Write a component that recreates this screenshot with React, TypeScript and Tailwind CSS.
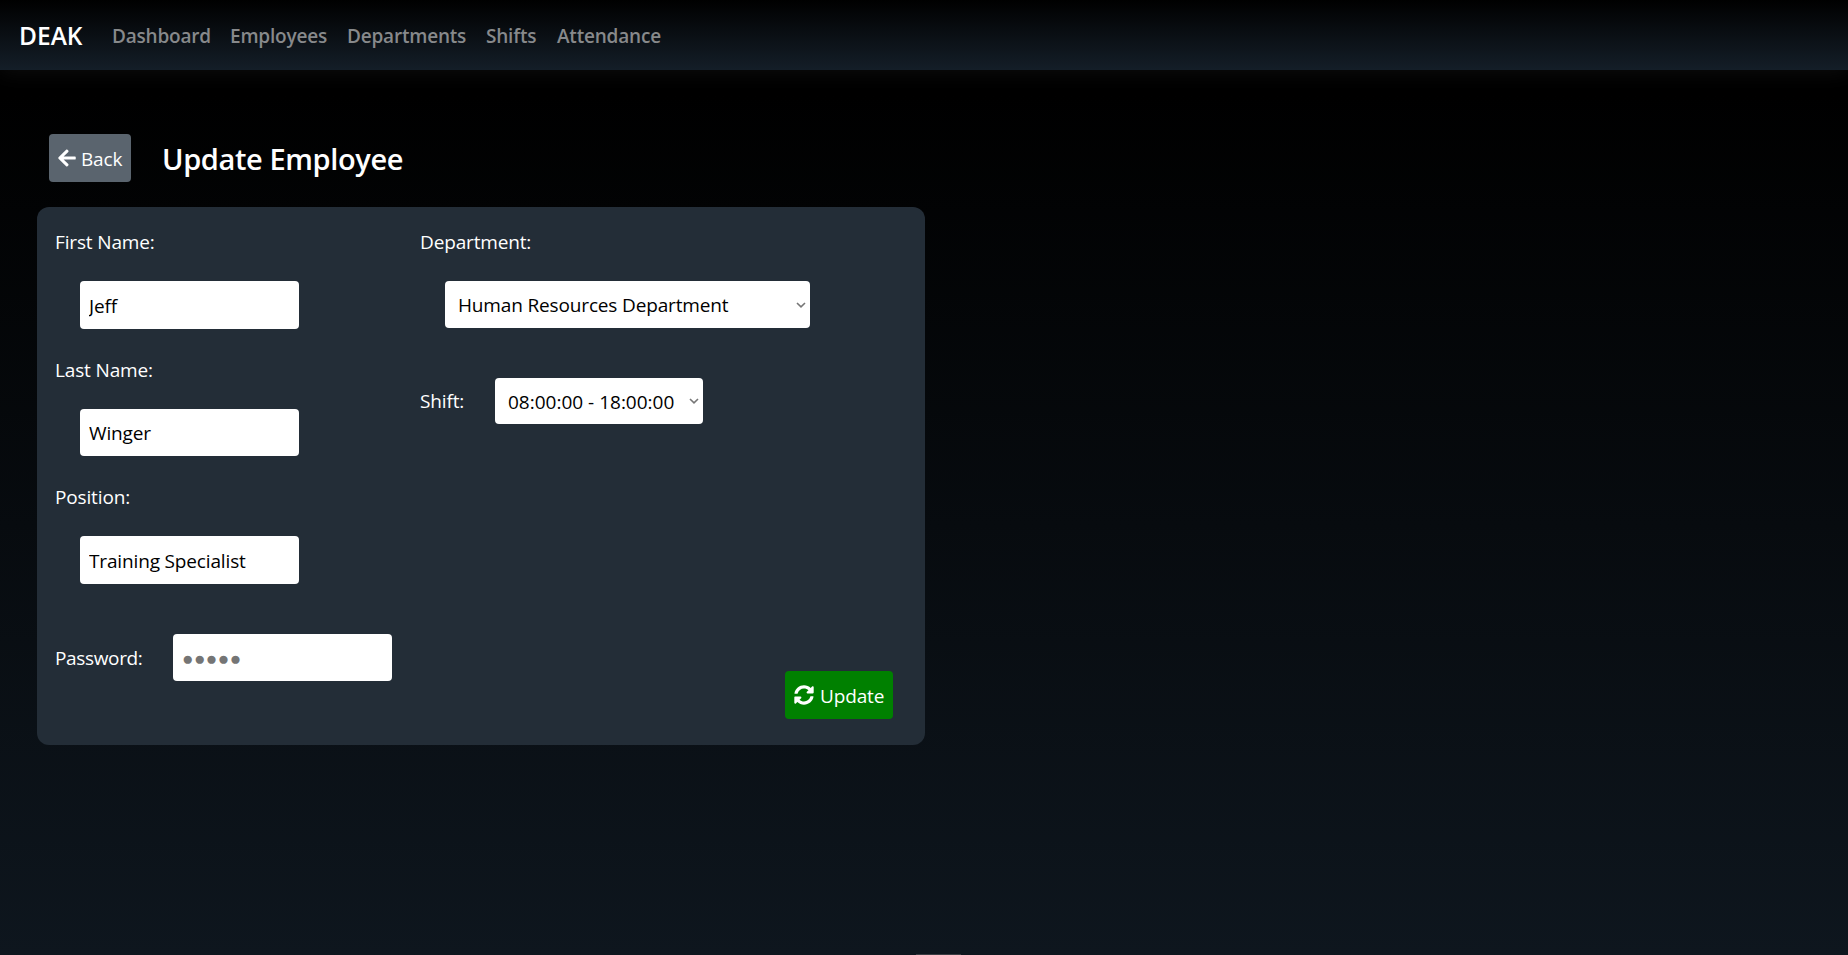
import type { ReactNode } from "react";

const navItems = [
  { label: "Dashboard", width: "w-[98px]" },
  { label: "Employees", width: "w-[97px]" },
  { label: "Departments", width: "w-[119px]" },
  { label: "Shifts", width: "w-[51px]" },
  { label: "Attendance", width: "w-[105px]" },
];

function Label({ children, className = "" }: { children: ReactNode; className?: string }) {
  return <span className={`whitespace-nowrap leading-[30px] text-white ${className}`}>{children}</span>;
}

function TextField({ label, value, inputClass }: { label: string; value: string; inputClass: string }) {
  return (
    <label className="flex flex-col">
      <Label>{label}</Label>
      <input
        defaultValue={value}
        className={`ml-[25px] w-[219px] rounded bg-white px-[9px] pt-px text-black outline-none ${inputClass}`}
      />
    </label>
  );
}

function Chevron() {
  return (
    <svg viewBox="0 0 10 6" className="h-[6px] w-[10px]" fill="none" stroke="#767676" strokeWidth="1.6">
      <path d="M1 1l4 3.8L9 1" />
    </svg>
  );
}

function SelectBox({ value, className }: { value: string; className: string }) {
  return (
    <button
      type="button"
      className={`flex items-center justify-between rounded bg-white pr-[4px] pl-[13px] whitespace-nowrap text-black ${className}`}
    >
      <span className="pt-0.5">{value}</span>
      <Chevron />
    </button>
  );
}

function ArrowLeft() {
  return (
    <svg viewBox="0 0 448 512" className="h-5 w-[18px]" fill="currentColor">
      <path d="M257.500 445.100l-22.200 22.200c-9.400 9.400-24.600 9.400-33.900 0L7 273c-9.400-9.400-9.400-24.600 0-33.900L201.400 44.700c9.400-9.400 24.600-9.400 33.900 0l22.200 22.200c9.500 9.500 9.300 25-.4 34.300L136.600 216H424c13.300 0 24 10.700 24 24v32c0 13.300-10.700 24-24 24H136.600l120.500 114.800c9.800 9.300 10 24.800.4 34.300z" />
    </svg>
  );
}

function Refresh() {
  return (
    <svg viewBox="0 0 512 512" className="size-5" fill="currentColor">
      <path d="M370.720 133.280C339.458 104.008 298.888 87.962 255.848 88c-77.458.068-144.328 53.178-162.791 126.850-1.344 5.363-6.122 9.150-11.651 9.150H24.103c-7.498 0-13.194-6.807-11.807-14.176C33.933 94.924 134.813 8 256 8c66.448 0 126.791 26.136 171.315 68.685L463.030 40.970C478.149 25.851 504 36.559 504 57.941V192c0 13.255-10.745 24-24 24H345.941c-21.382 0-32.090-25.851-16.971-40.971l41.750-41.749zM32 296h134.059c21.382 0 32.090 25.851 16.971 40.971l-41.750 41.750c31.262 29.273 71.835 45.319 114.876 45.280 77.418-.070 144.315-53.144 162.787-126.849 1.344-5.363 6.122-9.150 11.651-9.150h57.304c7.498 0 13.194 6.807 11.807 14.176C478.067 417.076 377.187 504 256 504c-66.448 0-126.791-26.136-171.315-68.685L48.970 471.030C33.851 486.149 8 475.441 8 454.059V320c0-13.255 10.745-24 24-24z" />
    </svg>
  );
}

export default function App() {
  return (
    <div className="relative flex h-[955px] w-full flex-col overflow-hidden bg-linear-to-b/srgb from-black from-10% to-[#0e161e] font-['Open_Sans',sans-serif] text-[19px] tracking-[-0.15px]">
      <nav className="flex h-[70px] shrink-0 items-center bg-linear-to-b/srgb from-black to-[#141e28] pt-px pl-[19px] shadow-[0_3px_20px_rgba(255,255,255,0.05)]">
        <a href="#" className="w-[93px] text-[24.5px] leading-[36px] font-semibold tracking-normal text-white">
          DEAK
        </a>
        <ul className="flex gap-[20px]">
          {navItems.map((item) => (
            <li key={item.label} className={item.width}>
              <a href="#" className="leading-[30px] font-semibold tracking-[-0.2px] whitespace-nowrap text-[#87898b]">
                {item.label}
              </a>
            </li>
          ))}
        </ul>
      </nav>

      <main className="pt-16 pl-[37px]">
        <header className="flex h-[73px] items-start pl-3">
          <button type="button" className="flex h-12 w-[82px] items-center gap-[5px] rounded bg-[#5a646e] pl-[9px] text-white">
            <ArrowLeft />
            <span className="pt-0.5">Back</span>
          </button>
          <h1 className="ml-[31px] pt-1 text-[29px] leading-[42px] font-semibold tracking-[-0.38px] text-white">
            Update Employee
          </h1>
        </header>

        <form className="flex h-[538px] w-[888px] rounded-xl bg-[#232d37] pt-5 pl-[18px]">
          <div className="flex w-[365px] flex-col">
            <TextField label="First Name:" value="Jeff" inputClass="mt-6 h-12" />
            <div className="pt-[26px]">
              <TextField label="Last Name:" value="Winger" inputClass="mt-6 h-[47px]" />
            </div>
            <div className="pt-[26px]">
              <TextField label="Position:" value="Training Specialist" inputClass="mt-6 h-12" />
            </div>
            <label className="mt-[50px] flex items-center">
              <Label className="w-[118px] tracking-[-0.35px]">Password:</Label>
              <input
                type="text"
                placeholder="●●●●●"
                className="h-[47px] w-[219px] rounded bg-white px-[9px] outline-none placeholder:tracking-[0.45px] placeholder:text-[#757575]"
              />
            </label>
          </div>

          <div className="flex flex-1 flex-col">
            <div className="flex flex-col">
              <Label>Department:</Label>
              <SelectBox value="Human Resources Department" className="mt-6 ml-[25px] h-[47px] w-[365px]" />
            </div>
            <div className="mt-[50px] flex items-center">
              <Label className="w-[75px]">Shift:</Label>
              <SelectBox value="08:00:00 - 18:00:00" className="h-[46px] w-[208px] tracking-normal" />
            </div>
            <button
              type="submit"
              className="mt-auto mr-8 mb-[26px] flex h-12 w-[108px] items-center gap-[6px] self-end rounded bg-[#008000] pl-[9px] text-white"
            >
              <Refresh />
              <span className="pt-0.5">Update</span>
            </button>
          </div>
        </form>
      </main>
      <div className="absolute bottom-0 left-[916px] h-px w-[45px] bg-[#3a3d43]" />
    </div>
  );
}
